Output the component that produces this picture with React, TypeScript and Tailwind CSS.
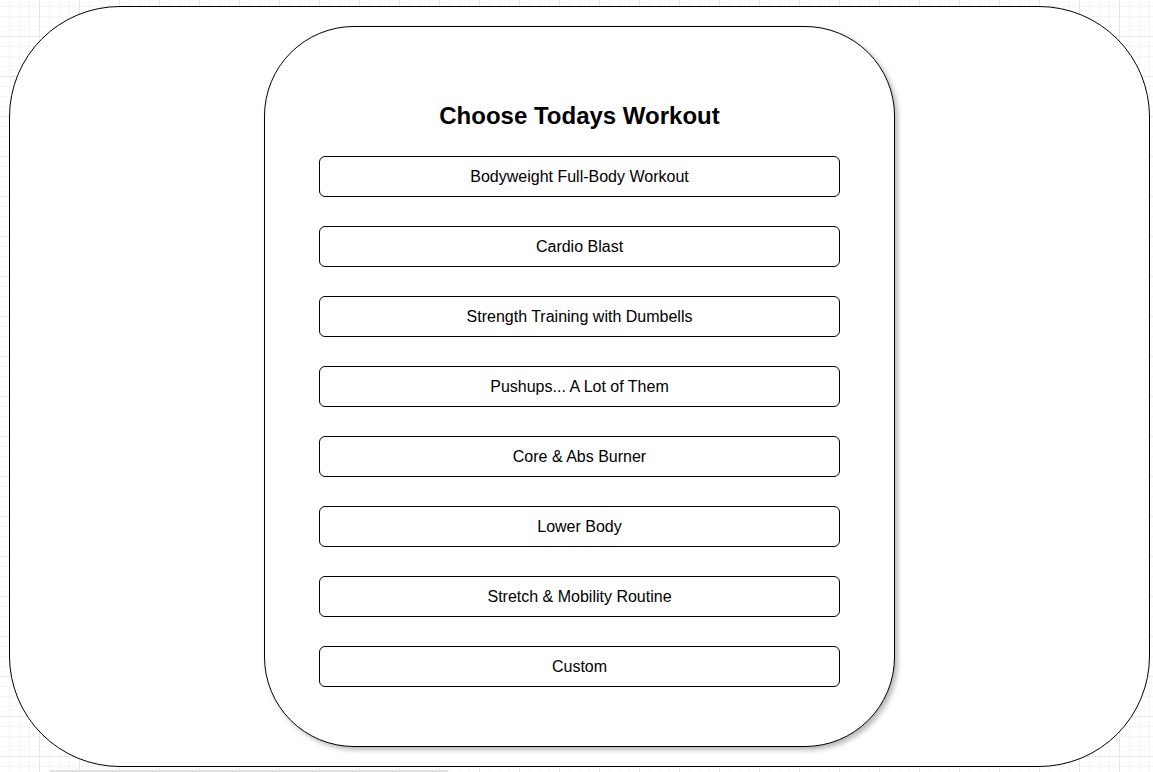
const workouts = [
  "Bodyweight Full-Body Workout",
  "Cardio Blast",
  "Strength Training with Dumbells",
  "Pushups... A Lot of Them",
  "Core & Abs Burner",
  "Lower Body",
  "Stretch & Mobility Routine",
  "Custom",
];

export default function App() {
  return (
    <div
      className="h-[772px] w-[1153px] overflow-hidden bg-white pl-[9px] pt-[6px] font-['Liberation_Sans',Arial,sans-serif] text-black [background-image:linear-gradient(#e6e6e6_1px,transparent_1px),linear-gradient(90deg,#e6e6e6_1px,transparent_1px),linear-gradient(#f5f5f5_1px,transparent_1px),linear-gradient(90deg,#f5f5f5_1px,transparent_1px)] [background-position:-1px_-4px] [background-size:40px_40px,40px_40px,10px_10px,10px_10px]"
    >
      <div className="flex h-[761px] w-[1141px] justify-center rounded-[111px] border border-black bg-white pt-[19px]">
        <div className="flex h-[721px] w-[631px] flex-col items-center rounded-[90px] border border-black bg-white pt-[75px] shadow-[3px_3px_5px_rgba(0,0,0,0.28)]">
          <h1 className="text-[24px] font-bold leading-[28px]">Choose Todays Workout</h1>

          <div className="mt-[26px] flex flex-col gap-[29px]">
            {workouts.map((name) => (
              <button
                key={name}
                className="flex h-[41px] w-[521px] items-center justify-center rounded-[6px] border border-black bg-white text-[16px] leading-none"
              >
                {name}
              </button>
            ))}
          </div>
        </div>
      </div>

      <div className="ml-[41px] mt-[3px] h-[2px] w-[398px] bg-[#e2e2e2]" />
    </div>
  );
}
